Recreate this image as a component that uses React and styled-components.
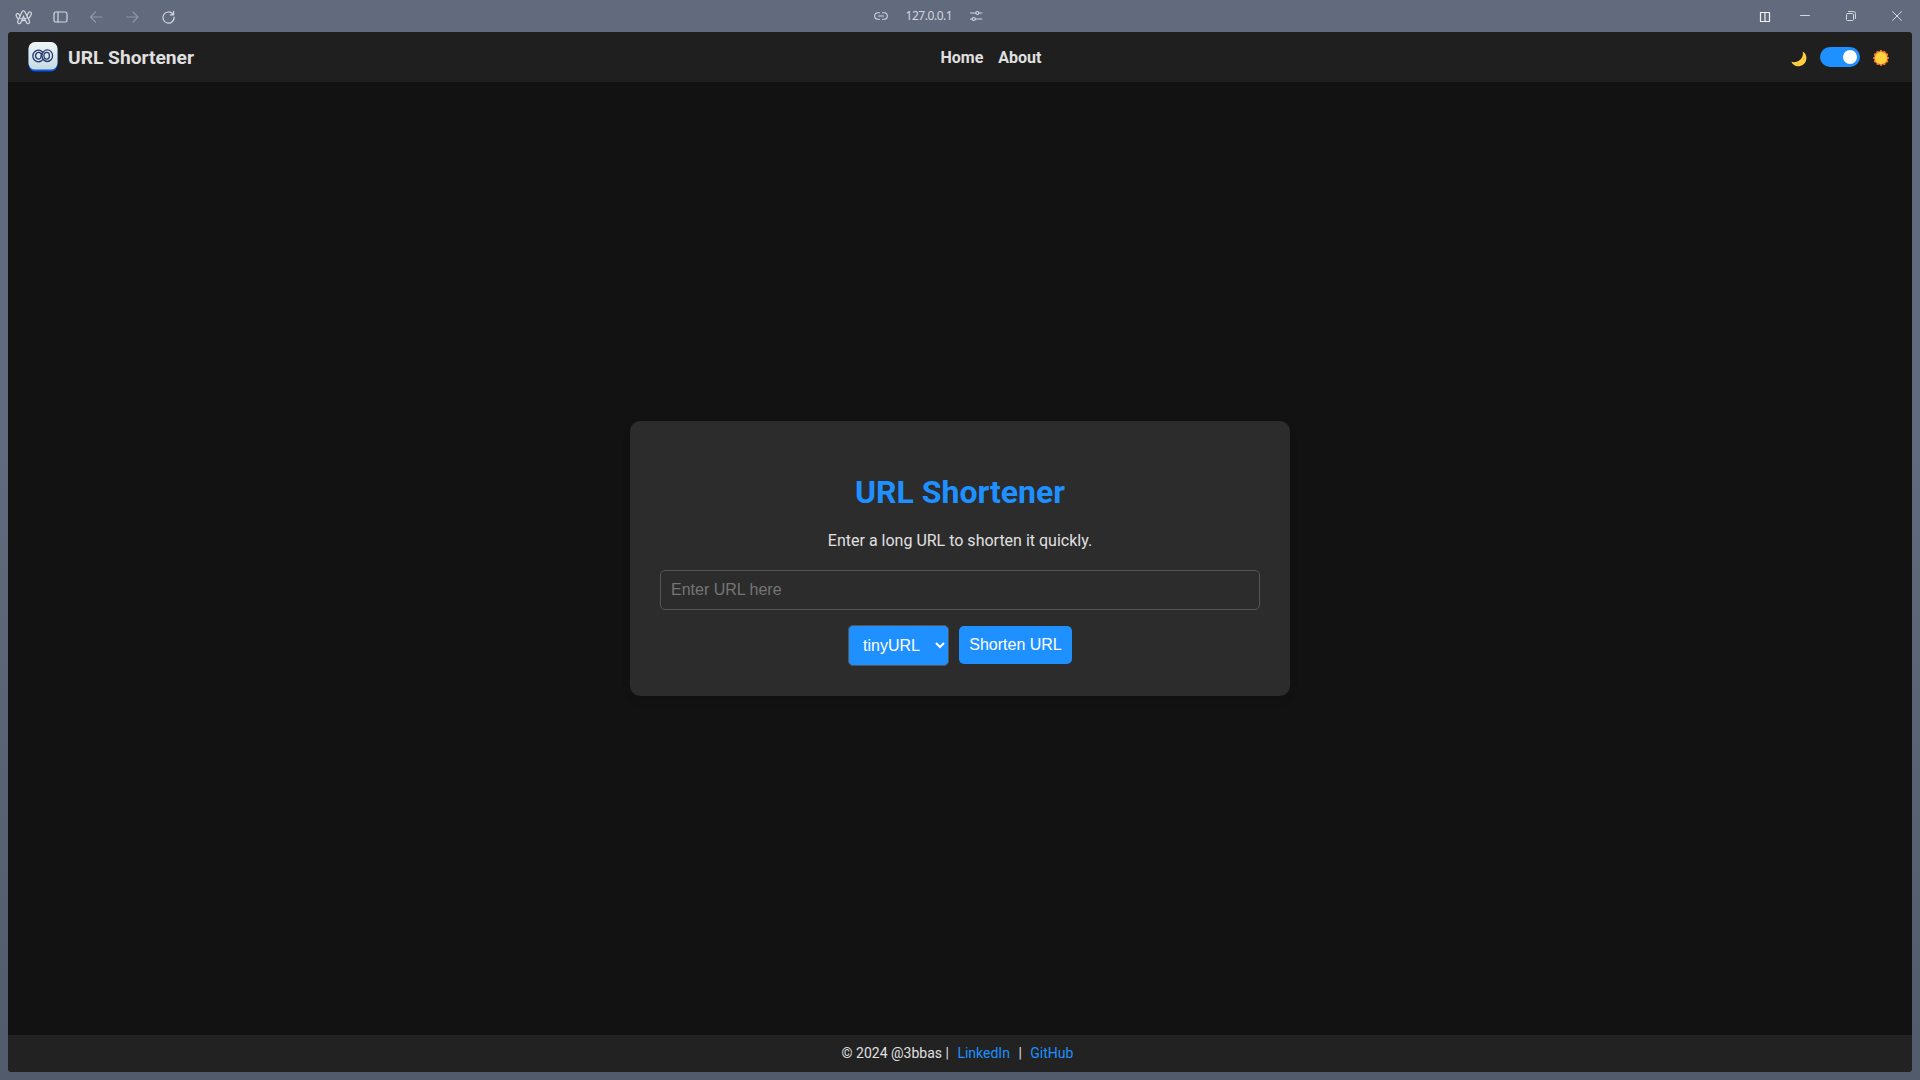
import React, { useState } from "react";
import styled, { createGlobalStyle } from "styled-components";

const GlobalStyle = createGlobalStyle`
  * { box-sizing: border-box; }
  body {
    margin: 0;
    font-family: Roboto, "Liberation Sans", sans-serif;
    font-size: 16px;
    overflow: hidden;
  }
`;

const Window = styled.div`
  width: 100%;
  height: 100vh;
  display: flex;
  flex-direction: column;
  padding: 0 8px 8px;
  background: linear-gradient(#626b7e, #626b7d 40%, #525b6b);
`;

const TitleBar = styled.div`
  height: 32px;
  flex: none;
  display: grid;
  grid-template-columns: 1fr auto 1fr;
  align-items: center;
  color: #d3d6de;
`;

const Group = styled.div`
  display: flex;
  align-items: center;
  gap: ${(p) => p.$gap}px;
  justify-content: ${(p) => (p.$end ? "flex-end" : "flex-start")};
  padding: ${(p) => p.$pad || "0"};
`;

const Address = styled.span`
  font: 12px/16px "Noto Sans", sans-serif;
  letter-spacing: -0.45px;
  width: 46px;
  white-space: nowrap;
`;

const Glyph = styled.svg`
  display: block;
  flex: none;
  fill: none;
  stroke: currentColor;
  stroke-width: ${(p) => p.$weight || 1.2};
  stroke-linecap: round;
  stroke-linejoin: round;
  opacity: ${(p) => (p.$dim ? 0.4 : 1)};
`;

const Page = styled.div`
  flex: 1;
  min-height: 0;
  display: flex;
  flex-direction: column;
  border-radius: 4px;
  overflow: hidden;
  background: #121212;
  color: #e0e0e0;
`;

const Header = styled.header`
  height: 50px;
  flex: none;
  display: flex;
  justify-content: space-between;
  align-items: center;
  padding: 0 20px;
  background: #1f1f1f;
`;

const Brand = styled.div`
  display: flex;
  align-items: center;
  gap: 10px;
  font-size: 19.2px;
  font-weight: 700;
`;

const Nav = styled.nav`
  display: flex;
  gap: 15px;

  a {
    color: inherit;
    font-weight: 700;
    text-decoration: none;
  }
`;

const ThemeControls = styled.div`
  display: flex;
  align-items: center;
  gap: 13px;
  padding: 0 3px;

  svg { margin-top: 2px; }
  svg:first-child { margin-top: 4px; }
`;

const Switch = styled.button`
  display: flex;
  align-items: center;
  justify-content: ${(p) => (p.$on ? "flex-end" : "flex-start")};
  width: 40px;
  height: 20px;
  padding: 0 3px;
  border: 0;
  border-radius: 10px;
  background: ${(p) => (p.$on ? "#1e90ff" : "#cccccc")};
`;

const Knob = styled.span`
  width: 14px;
  height: 14px;
  border-radius: 50%;
  background: #fff;
`;

const Main = styled.main`
  flex: 1;
  display: flex;
  align-items: center;
  justify-content: center;
`;

const Card = styled.section`
  width: 660px;
  height: 275px;
  padding: 30px;
  border-radius: 10px;
  background: #2c2c2c;
  box-shadow: 0 4px 8px rgba(0, 0, 0, 0.1);
  text-align: center;
`;

const Title = styled.h1`
  margin: 22px 0 20px;
  font-size: 32px;
  line-height: 38px;
  font-weight: 700;
  color: #1e90ff;
`;

const Lead = styled.p`
  margin: 0;
  line-height: 19px;
`;

const UrlInput = styled.input`
  display: block;
  width: 100%;
  height: 40px;
  margin: 20px 0 15px;
  padding: 10px;
  border: 1px solid #555;
  border-radius: 5px;
  background: #2c2c2c;
  color: #e0e0e0;
  font: 16px "Liberation Sans", Arial, sans-serif;
  outline: 0;

  &::placeholder { color: #757575; }
`;

const Actions = styled.div`
  display: flex;
  justify-content: center;
  align-items: flex-start;
  gap: 10px;
`;

const Provider = styled.select`
  width: 101px;
  height: 41px;
  padding: 10px;
  border: 1px solid #555;
  border-radius: 5px;
  background: #1e90ff;
  color: #fff;
  font: 16px "Liberation Sans", Arial, sans-serif;
`;

const Submit = styled.button`
  width: 113px;
  height: 38px;
  margin-top: 1px;
  padding: 0;
  border: 0;
  border-radius: 5px;
  background: #1e90ff;
  color: #fff;
  font: 16px "Liberation Sans", Arial, sans-serif;
`;

const Footer = styled.footer`
  height: 37px;
  flex: none;
  display: flex;
  align-items: center;
  justify-content: center;
  padding-bottom: 2px;
  background: #222;
  font-size: 14px;
  white-space: pre;

  a {
    margin: 0 5px;
    color: #1e90ff;
    text-decoration: none;
  }
`;

const arcBow = "M2.600 6.800C4.200 11.600 11.800 12 14 5.200";
const arcLegs = "M4 13.200L8 4.200L12.300 13.200";

function ArcIcon() {
  return (
    <Glyph width="18" height="18" viewBox="0 0 17 17">
      <path d={arcBow} strokeWidth="4.200" />
      <path d={arcBow} stroke="#626b7e" strokeWidth="1.900" />
      <path d={arcLegs} strokeWidth="4.200" />
      <path d={arcLegs} stroke="#626b7e" strokeWidth="1.900" />
      <path d="M4.900 9.600C6.600 10.700 9.300 10.700 11.300 9.300" strokeWidth="1" />
    </Glyph>
  );
}

function Logo() {
  return (
    <svg width="30" height="30" viewBox="0 0 30 30">
      <defs>
        <linearGradient id="tile" x1="0" y1="0" x2="0" y2="1">
          <stop offset="0" stopColor="#eef5f6" />
          <stop offset="1" stopColor="#c5dce2" />
        </linearGradient>
      </defs>
      <rect x="0.5" y="1" width="29" height="28.5" rx="6.5" fill="#0b55e8" />
      <rect x="0.5" y="0" width="29" height="27.6" rx="6.5" fill="url(#tile)" />
      <g fill="none" stroke="#26396c" strokeWidth="1.300" strokeLinecap="round">
        <path d="M14.500 10A5.600 5.800 0 1 0 14.800 17.600" />
        <path d="M12.600 11.300A2.900 3.400 0 1 0 12.800 15.900L13.400 11.400" />
        <ellipse cx="19.300" cy="13.700" rx="5.300" ry="5.800" />
        <ellipse cx="18.700" cy="13.700" rx="2.700" ry="3.400" />
      </g>
    </svg>
  );
}

function Moon() {
  return (
    <svg width="16" height="16" viewBox="0 0 16 16">
      <path d="M11.700 0.400A8 8 0 0 1 15.400 7.600A8 8 0 0 1 .3 10.800C6.500 12.800 13.400 7.600 11.700.4Z" fill="#ffcf3f" />
      <circle cx="7" cy="13" r="0.800" fill="#dfa22f" />
      <circle cx="12.700" cy="8.200" r="0.700" fill="#dfa22f" />
    </svg>
  );
}

const rays = Array.from({ length: 12 }, (_, i) => {
  const angle = (i * Math.PI) / 6;
  return [8 + 6.6 * Math.cos(angle), 8 + 6.6 * Math.sin(angle)];
});

function Sun() {
  return (
    <svg width="16" height="16" viewBox="0 0 16 16">
      {rays.map(([x, y], i) => (
        <circle key={i} cx={x} cy={y} r="1.35" fill="#f9812a" />
      ))}
      <circle cx="8" cy="8" r="6.8" fill="#f9812a" />
      <circle cx="8" cy="8" r="6" fill="#ffd23d" />
    </svg>
  );
}

export default function App() {
  const [light, setLight] = useState(true);
  const [url, setUrl] = useState("");

  return (
    <>
      <GlobalStyle />
      <Window>
        <TitleBar>
          <Group $gap={20} $pad="2px 0 0 7px">
            <Group $pad="0 0 1px">
              <ArcIcon />
            </Group>
            <Group $gap={20} $pad="0 0 0 -1px">
              <Glyph width="16" height="16" viewBox="0.5 0 16 16">
                <rect x="1.500" y="3" width="13" height="10" rx="1.800" />
                <path d="M5.500 3v10" />
              </Glyph>
              <Glyph width="16" height="16" viewBox="0.5 0 16 16" $dim>
                <path d="M13.500 8H2M7 3L2 8l5 5" />
              </Glyph>
              <Glyph width="16" height="16" viewBox="0.5 0 16 16" $dim>
                <path d="M2 8h11.500M8.500 3l5 5-5 5" />
              </Glyph>
              <Glyph width="16" height="16" viewBox="0.5 0 16 16">
                <path d="M12.500 5.200A5.600 5.600 0 1 0 13.600 8M13.100 2.300v3.500H9.700" />
              </Glyph>
            </Group>
          </Group>
          <Group $gap={18} $pad="0 64px 0 0">
            <Glyph width="14" height="12" viewBox="0 0 14 12" $weight={1.1}>
              <path d="M5.500 2.700H4a3.300 3.300 0 0 0 0 6.600h1.500M8.500 2.700H10a3.300 3.300 0 0 1 0 6.600H8.500M4.500 6h5" />
            </Glyph>
            <Address>127.0.0.1</Address>
            <Glyph width="13" height="12" viewBox="0.5 0 13 12" $weight={1.1}>
              <path d="M.7 3h5.500M9.400 3h2.900M.7 9h2M5.900 9h6.400" />
              <circle cx="7.800" cy="3" r="1.500" />
              <circle cx="4.300" cy="9" r="1.500" />
            </Glyph>
          </Group>
          <Group $gap={24} $end $pad="0 7px 0 0">
            <Glyph width="16" height="16" viewBox="0 0 16 16" color="#f0f1f4">
              <path d="M3.500 4.500h9v9h-9zM8 4.500v9" />
            </Glyph>
            <Group $gap={30}>
              <Glyph width="16" height="16" viewBox="0 0 16 16" $weight={1}>
                <path d="M3.500 7.500h9" />
              </Glyph>
              <Glyph width="16" height="16" viewBox="0 0 16 16" $weight={1}>
                <rect x="3.500" y="5.500" width="7" height="7" rx="1" />
                <path d="M5.500 3.500h5a2 2 0 0 1 2 2v5" />
              </Glyph>
              <Glyph width="16" height="16" viewBox="0 0 16 16" $weight={1}>
                <path d="M3.500 3.500l9 9M12.500 3.500l-9 9" />
              </Glyph>
            </Group>
          </Group>
        </TitleBar>
        <Page>
          <Header>
            <Brand>
              <Logo />
              URL Shortener
            </Brand>
            <Nav>
              <a href="#home">Home</a>
              <a href="#about">About</a>
            </Nav>
            <ThemeControls>
              <Moon />
              <Switch $on={light} onClick={() => setLight(!light)} aria-label="Theme">
                <Knob />
              </Switch>
              <Sun />
            </ThemeControls>
          </Header>
          <Main>
            <Card>
              <Title>URL Shortener</Title>
              <Lead>Enter a long URL to shorten it quickly.</Lead>
              <UrlInput
                placeholder="Enter URL here"
                value={url}
                onChange={(e) => setUrl(e.target.value)}
              />
              <Actions>
                <Provider>
                  <option>tinyURL</option>
                </Provider>
                <Submit>Shorten URL</Submit>
              </Actions>
            </Card>
          </Main>
          <Footer>
            <span>© 2024 @3bbas | </span>
            <a href="#linkedin">LinkedIn</a>
            <span> | </span>
            <a href="#github">GitHub</a>
          </Footer>
        </Page>
      </Window>
    </>
  );
}
